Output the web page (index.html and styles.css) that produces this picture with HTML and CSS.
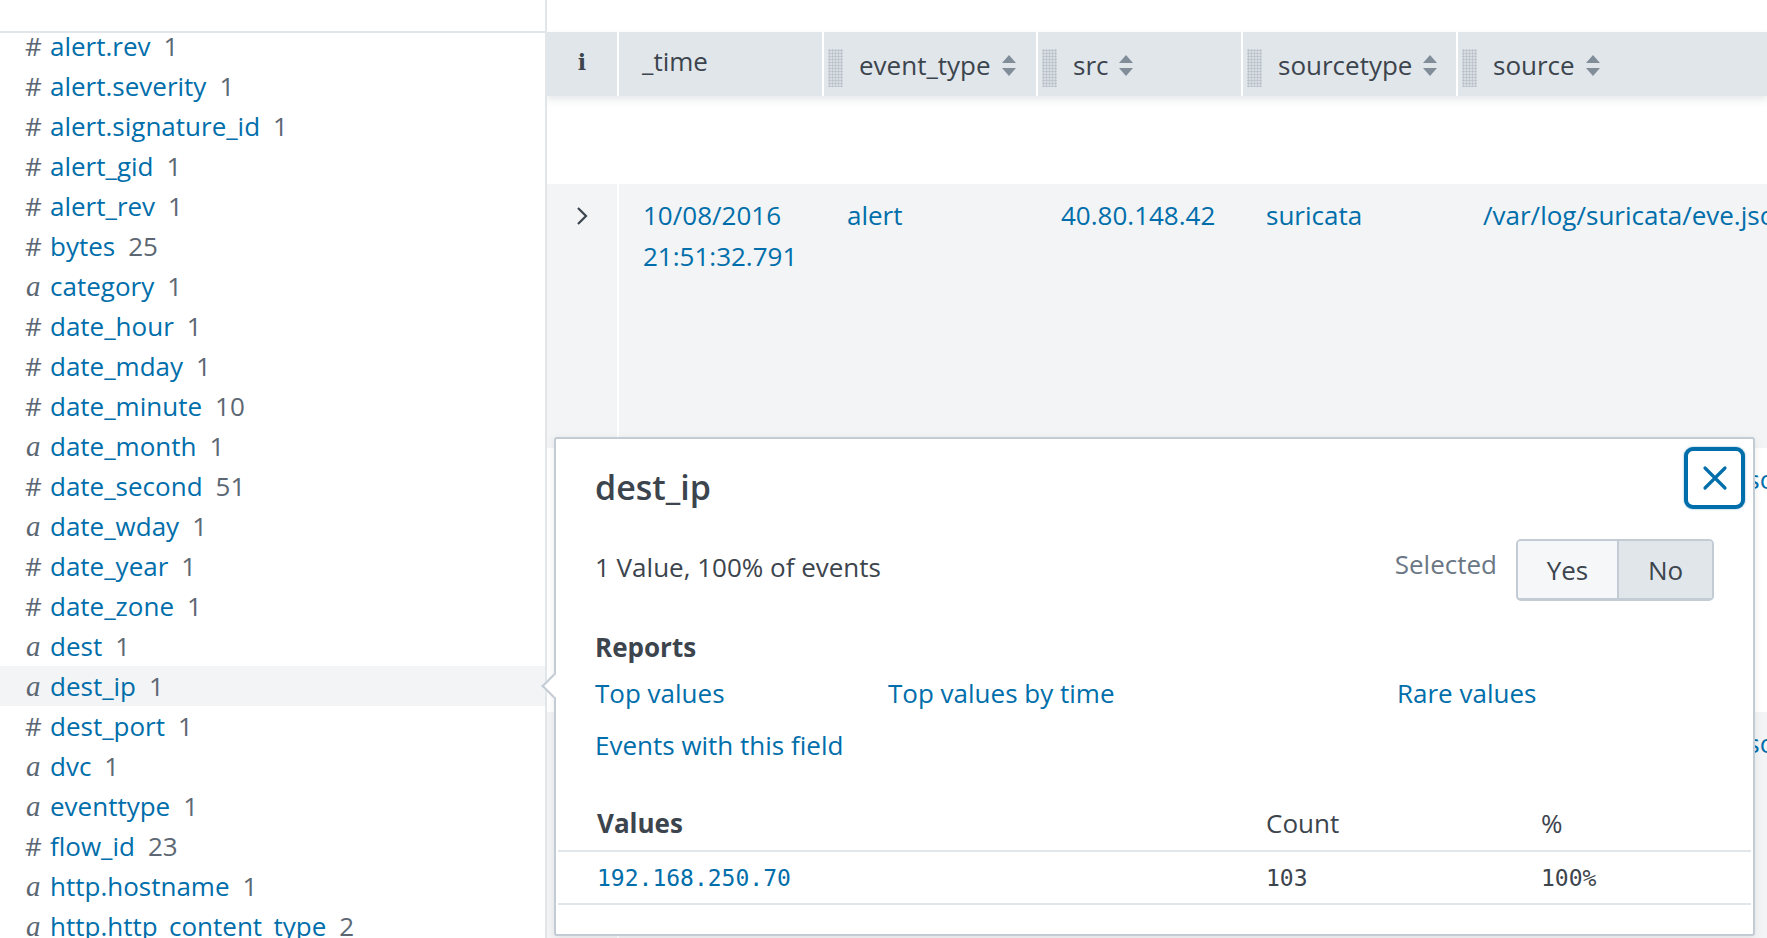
FILE: index.html
```html
<!DOCTYPE html>
<html lang="en">
<head>
<meta charset="utf-8">
<title>Fields - dest_ip</title>
<link rel="stylesheet" href="styles.css">
</head>
<body>
<div class="app">
  <aside class="fields">
    <div class="fields-top"></div>
    <ul class="field-list">
      <li class="field"><span class="type">#</span><span class="name">alert.rev</span><span class="count">1</span></li>
      <li class="field"><span class="type">#</span><span class="name">alert.severity</span><span class="count">1</span></li>
      <li class="field"><span class="type">#</span><span class="name">alert.signature_id</span><span class="count">1</span></li>
      <li class="field"><span class="type">#</span><span class="name">alert_gid</span><span class="count">1</span></li>
      <li class="field"><span class="type">#</span><span class="name">alert_rev</span><span class="count">1</span></li>
      <li class="field"><span class="type">#</span><span class="name">bytes</span><span class="count">25</span></li>
      <li class="field"><span class="type str">a</span><span class="name">category</span><span class="count">1</span></li>
      <li class="field"><span class="type">#</span><span class="name">date_hour</span><span class="count">1</span></li>
      <li class="field"><span class="type">#</span><span class="name">date_mday</span><span class="count">1</span></li>
      <li class="field"><span class="type">#</span><span class="name">date_minute</span><span class="count">10</span></li>
      <li class="field"><span class="type str">a</span><span class="name">date_month</span><span class="count">1</span></li>
      <li class="field"><span class="type">#</span><span class="name">date_second</span><span class="count">51</span></li>
      <li class="field"><span class="type str">a</span><span class="name">date_wday</span><span class="count">1</span></li>
      <li class="field"><span class="type">#</span><span class="name">date_year</span><span class="count">1</span></li>
      <li class="field"><span class="type">#</span><span class="name">date_zone</span><span class="count">1</span></li>
      <li class="field"><span class="type str">a</span><span class="name">dest</span><span class="count">1</span></li>
      <li class="field active"><span class="type str">a</span><span class="name">dest_ip</span><span class="count">1</span></li>
      <li class="field"><span class="type">#</span><span class="name">dest_port</span><span class="count">1</span></li>
      <li class="field"><span class="type str">a</span><span class="name">dvc</span><span class="count">1</span></li>
      <li class="field"><span class="type str">a</span><span class="name">eventtype</span><span class="count">1</span></li>
      <li class="field"><span class="type">#</span><span class="name">flow_id</span><span class="count">23</span></li>
      <li class="field"><span class="type str">a</span><span class="name">http.hostname</span><span class="count">1</span></li>
      <li class="field"><span class="type str">a</span><span class="name">http.http_content_type</span><span class="count">2</span></li>
    </ul>
  </aside>

  <main class="results">
    <div class="results-top"></div>
    <div class="thead">
      <div class="th th-info"><span class="info-i">i</span></div>
      <div class="th th-time">_time</div>
      <div class="th"><span class="handle"></span><span class="th-label">event_type</span><span class="sort"></span></div>
      <div class="th"><span class="handle"></span><span class="th-label">src</span><span class="sort"></span></div>
      <div class="th"><span class="handle"></span><span class="th-label">sourcetype</span><span class="sort"></span></div>
      <div class="th"><span class="handle"></span><span class="th-label">source</span><span class="sort"></span></div>
    </div>
    <div class="gap-row"></div>
    <div class="event-row">
      <div class="td td-expand">
        <svg class="chevron" width="12" height="20" viewBox="0 0 12 20"><polyline points="2,2 10,10 2,18" fill="none" stroke="#3c444d" stroke-width="2.2"/></svg>
      </div>
      <div class="td td-time"><a>10/08/2016<br>21:51:32.791</a></div>
      <div class="td"><a>alert</a></div>
      <div class="td"><a>40.80.148.42</a></div>
      <div class="td"><a>suricata</a></div>
      <div class="td td-source"><a>/var/log/suricata/eve.json</a></div>
    </div>
    <div class="event-row alt">
      <div class="td td-expand">
        <svg class="chevron" width="12" height="20" viewBox="0 0 12 20"><polyline points="2,2 10,10 2,18" fill="none" stroke="#3c444d" stroke-width="2.2"/></svg>
      </div>
      <div class="td td-time"></div>
      <div class="td"></div>
      <div class="td"></div>
      <div class="td"></div>
      <div class="td td-source"><a>/var/log/suricata/eve.json</a></div>
    </div>
    <div class="event-row">
      <div class="td td-expand">
        <svg class="chevron" width="12" height="20" viewBox="0 0 12 20"><polyline points="2,2 10,10 2,18" fill="none" stroke="#3c444d" stroke-width="2.2"/></svg>
      </div>
      <div class="td td-time"></div>
      <div class="td"></div>
      <div class="td"></div>
      <div class="td"></div>
      <div class="td td-source"><a>/var/log/suricata/eve.json</a></div>
    </div>
  </main>

  <section class="popover">
    <span class="arrow"></span>
    <button class="close" aria-label="Close">
      <svg width="26" height="26" viewBox="0 0 26 26"><path d="M3 3 L23 23 M23 3 L3 23" stroke="#006eaa" stroke-width="3.2" stroke-linecap="round"/></svg>
    </button>
    <h2 class="pop-title">dest_ip</h2>
    <div class="pop-summary">
      <span class="summary-text">1 Value, 100% of events</span>
      <div class="selected">
        <span class="selected-label">Selected</span>
        <div class="toggle">
          <span class="opt">Yes</span>
          <span class="opt on">No</span>
        </div>
      </div>
    </div>
    <h3 class="pop-sub">Reports</h3>
    <div class="reports">
      <a>Top values</a>
      <a>Top values by time</a>
      <a>Rare values</a>
      <a>Events with this field</a>
    </div>
    <div class="vtable">
      <div class="vrow vhead">
        <span class="vcol-val">Values</span>
        <span class="vcol-count">Count</span>
        <span class="vcol-pct">%</span>
      </div>
      <div class="vrow vdata">
        <a class="vcol-val mono">192.168.250.70</a>
        <span class="vcol-count mono">103</span>
        <span class="vcol-pct mono">100%</span>
      </div>
    </div>
  </section>
</div>
</body>
</html>
```

FILE: styles.css
```css
* { box-sizing: border-box; }
html, body { margin: 0; padding: 0; }
body {
  width: 1767px;
  height: 938px;
  overflow: hidden;
  background: #fff;
  font-family: "Open Sans", "Liberation Sans", sans-serif;
  font-size: 26px;
  color: #3c444d;
}
a { color: #006eaa; text-decoration: none; }

.app {
  position: relative;
  display: flex;
  height: 938px;
}

/* ---------- field sidebar ---------- */
.fields {
  width: 547px;
  flex: none;
  border-right: 2px solid #e1e6eb;
  display: flex;
  flex-direction: column;
  overflow: hidden;
}
.fields-top {
  height: 33px;
  flex: none;
  background: #fff;
  border-bottom: 2px solid #e1e6eb;
  position: relative;
  z-index: 1;
}
.field-list {
  list-style: none;
  margin: -7px 0 0;
  padding: 0;
}
.field {
  height: 40px;
  display: flex;
  align-items: center;
  padding-left: 25px;
  white-space: nowrap;
}
.field.active { background: #f3f4f6; }
.type {
  width: 25px;
  flex: none;
  color: #5c6773;
}
.type.str {
  font-family: "Liberation Serif", "DejaVu Serif", serif;
  font-style: italic;
  font-size: 29px;
  padding-left: 1px;
}
.name { color: #006eaa; }
.count { color: #5c6773; margin-left: 13px; }

/* ---------- results table ---------- */
.results {
  flex: 1;
  min-width: 0;
  display: flex;
  flex-direction: column;
  overflow: hidden;
}
.results-top { height: 32px; flex: none; }

.thead {
  display: grid;
  grid-template-columns: 70px 203px 212px 203px 213px 1fr;
  column-gap: 2px;
  height: 64px;
  flex: none;
  background: #fff;
  box-shadow: 0 4px 7px rgba(60, 70, 80, 0.12);
  position: relative;
  z-index: 1;
}
.th {
  background: #e1e6eb;
  display: flex;
  align-items: center;
  padding-top: 2px;
  padding-left: 4px;
  white-space: nowrap;
  color: #3c444d;
}
.th-info { justify-content: center; padding: 0 0 4px; }
.info-i {
  font-family: "DejaVu Serif", "Liberation Serif", serif;
  font-weight: bold;
  font-size: 22px;
}
.th-time { padding: 0 0 6px 23px; }
.handle {
  width: 15px;
  height: 38px;
  flex: none;
  margin-right: 16px;
  margin-top: 6px;
  background-image: radial-gradient(circle, #b9c0c8 0.9px, transparent 1.2px);
  background-size: 3px 3px;
  background-color: #d8dde3;
}
.th-label { line-height: 1; }
.sort {
  position: relative;
  width: 14px;
  height: 21px;
  margin-left: 11px;
  flex: none;
}
.sort::before, .sort::after {
  content: "";
  position: absolute;
  left: 0;
  border-left: 7px solid transparent;
  border-right: 7px solid transparent;
}
.sort::before { top: 0; border-bottom: 8px solid #818d99; }
.sort::after { bottom: 0; border-top: 8px solid #818d99; }

.gap-row { height: 88px; flex: none; }

.event-row {
  display: grid;
  grid-template-columns: 72px 205px 214px 205px 215px 1fr;
  background: #f2f4f5;
  height: 264px;
  flex: none;
  line-height: 41px;
  white-space: nowrap;
}
.event-row.alt { background: #fff; }
.td { padding: 11px 0 0 23px; }
.td-expand {
  border-right: 2px solid #fff;
  padding: 22px 0 0 29px;
}
.td-time { padding-left: 24px; }
.td-source { padding-left: 25px; }
.chevron { display: block; }

/* ---------- popover ---------- */
.popover {
  position: absolute;
  left: 554px;
  top: 437px;
  width: 1201px;
  height: 499px;
  background: #fff;
  border: 2px solid #c3cbd4;
  border-radius: 3px;
  box-shadow: 0 2px 8px rgba(0, 0, 0, 0.08);
  padding: 23px 39px 0 39px;
}
.arrow {
  position: absolute;
  left: -11px;
  top: 238px;
  width: 18px;
  height: 18px;
  background: #fff;
  border-left: 2px solid #c3cbd4;
  border-bottom: 2px solid #c3cbd4;
  transform: rotate(45deg);
}
.close {
  position: absolute;
  top: 8px;
  right: 8px;
  width: 61px;
  height: 62px;
  border: 4px solid #006eaa;
  border-radius: 9px;
  background: #fff;
  padding: 0;
  display: flex;
  align-items: center;
  justify-content: center;
  box-shadow: 0 0 2px rgba(0, 110, 170, 0.6);
}
.close svg { display: block; }
.pop-title {
  margin: 0;
  font-size: 34px;
  font-weight: 600;
  line-height: 50px;
  color: #3c444d;
}
.pop-summary {
  margin-top: 27px;
  height: 62px;
  display: flex;
  align-items: center;
  justify-content: space-between;
}
.summary-text { margin-top: -6px; }
.selected { display: flex; align-items: center; }
.selected-label { color: #6b7785; margin-right: 19px; margin-top: -13px; }
.toggle {
  display: flex;
  height: 62px;
  border: 2px solid #c3cbd4;
  border-bottom-width: 3px;
  border-radius: 5px;
  overflow: hidden;
}
.opt {
  width: 99px;
  display: flex;
  align-items: center;
  justify-content: center;
  background: #f5f7f8;
  color: #3c444d;
}
.opt + .opt { border-left: 2px solid #c3cbd4; width: 95px; }
.opt.on { background: #e1e6eb; }

.pop-sub {
  margin: 26px 0 0;
  font-size: 26px;
  font-weight: 700;
  line-height: 40px;
  color: #3c444d;
}
.reports {
  display: grid;
  grid-template-columns: 293px 509px auto;
  line-height: 52px;
}

.vtable { margin: 24px -37px 0; }
.vrow {
  display: grid;
  grid-template-columns: 708px 275px 1fr;
  border-bottom: 2px solid #e1e6eb;
  align-items: center;
}
.vrow > :first-child { padding-left: 39px; }
.vhead { height: 57px; }
.vhead .vcol-val { font-weight: 700; }
.vdata { height: 53px; }
.mono {
  font-family: "DejaVu Sans Mono", "Liberation Mono", monospace;
  font-size: 23px;
}
.vdata .vcol-count, .vdata .vcol-pct { color: #3c444d; }
```
